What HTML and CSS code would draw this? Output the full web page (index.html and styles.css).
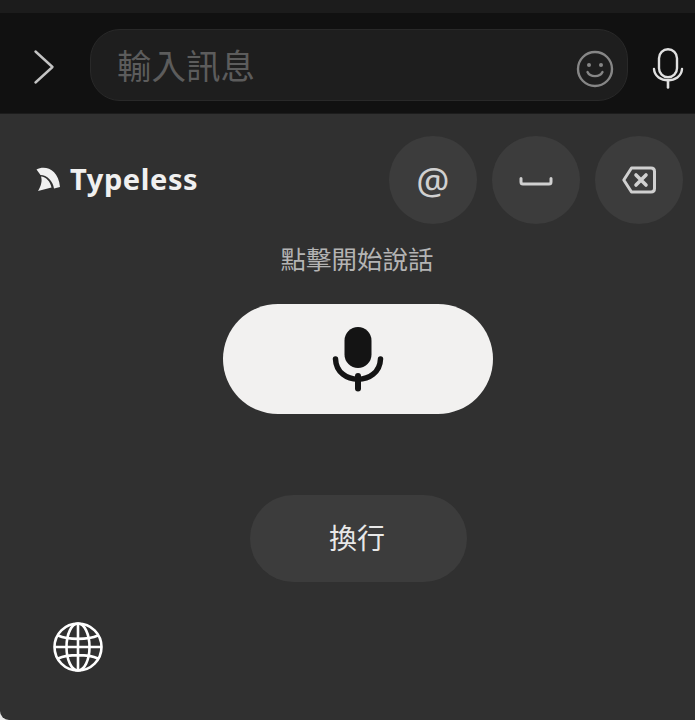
FILE: index.html
```html
<!DOCTYPE html>
<html lang="zh-Hant">
<head>
<meta charset="utf-8">
<title>Typeless</title>
<link rel="stylesheet" href="styles.css">
</head>
<body>
<div class="strip"></div>
<div class="bar">
  <svg class="chevron" width="22" height="36" viewBox="0 0 22 36"><path d="M2.5 2.5 L19.5 18 L2.5 33.5" fill="none" stroke="#c4c4c4" stroke-width="2.4" stroke-linecap="round" stroke-linejoin="round"/></svg>
  <div class="input">
    <span class="placeholder">輸入訊息</span>
    <svg width="38" height="38" viewBox="0 0 38 38"><circle cx="19" cy="19" r="17" fill="none" stroke="#868686" stroke-width="2.4"/><circle cx="13" cy="15" r="2" fill="#868686"/><circle cx="25" cy="15" r="2" fill="#868686"/><path d="M11.5 22 C14 27.5 24 27.5 26.5 22" fill="none" stroke="#868686" stroke-width="2.4" stroke-linecap="round"/></svg>
  </div>
  <svg class="barmic" width="32" height="41" viewBox="0 0 32 41"><rect x="7" y="1.2" width="18" height="28" rx="9" fill="none" stroke="#e0e0e0" stroke-width="2.4"/><path d="M2 21 C3 36 29 36 30 21" fill="none" stroke="#e0e0e0" stroke-width="2.4" stroke-linecap="round"/><path d="M16 33 V39.5" stroke="#e0e0e0" stroke-width="2.6" stroke-linecap="round"/></svg>
</div>
<main class="keyboard">
  <div class="toprow">
    <div class="brand">
      <svg class="logo" width="24" height="24" viewBox="0 0 24 24"><path d="M0.5 2.5 C9 -2 22.5 2 24 20 L18 21.5 C17 14 11 8 4.5 8 Z" fill="#f0f0f0"/><path d="M5 9.5 C10 9.5 14.5 15 15.5 20.5 L2 24 C5 19 6.5 14 5 9.5 Z" fill="#f0f0f0"/></svg>
      <span class="brandname">Typeless</span>
    </div>
    <div class="keys">
      <div class="key"><span class="at">@</span></div>
      <div class="key"><svg class="spacebar" width="34" height="10" viewBox="0 0 34 10"><path d="M2 2.5 V6 Q2 8 4 8 H30 Q32 8 32 6 V2.5" fill="none" stroke="#d0d0d0" stroke-width="3" stroke-linecap="round"/></svg></div>
      <div class="key"><svg width="34" height="28" viewBox="0 0 34 28"><path d="M9.5 2 H29 Q32.5 2 32.5 5.5 V22.5 Q32.5 26 29 26 H9.5 L1.8 14 Z" fill="none" stroke="#d0d0d0" stroke-width="3" stroke-linejoin="round"/><path d="M14 9 L24 19 M24 9 L14 19" stroke="#d0d0d0" stroke-width="3.6" stroke-linecap="round"/></svg></div>
    </div>
  </div>
  <div class="center">
    <p class="hint">點擊開始說話</p>
    <button class="talk"><svg width="54" height="66" viewBox="0 0 54 66"><rect x="13.5" y="1" width="27" height="41" rx="13.5" fill="#141414"/><path d="M4.5 33 C5.5 60 48.5 60 49.5 33" fill="none" stroke="#141414" stroke-width="5.5" stroke-linecap="round"/><path d="M27 50 V62.5" stroke="#141414" stroke-width="6" stroke-linecap="round"/></svg></button>
    <button class="newline">換行</button>
  </div>
  <svg class="globe" width="52" height="52" viewBox="0 0 52 52" fill="none" stroke="#fff" stroke-width="2.6"><circle cx="26" cy="26" r="23.5"/><ellipse cx="26" cy="26" rx="11.5" ry="23.5"/><path d="M26 2.5 V49.5 M2.5 26 H49.5 M6 14.5 C16 19 36 19 46 14.5 M6 37.5 C16 33 36 33 46 37.5"/></svg>
</main>
</body>
</html>
```
FILE: styles.css
```css
html, body {
  margin: 0;
  padding: 0;
  background: #e8e8e8;
}
body {
  width: 695px;
  height: 720px;
  overflow: hidden;
  display: flex;
  flex-direction: column;
  font-family: "Noto Sans CJK TC", "Noto Sans", sans-serif;
}
.strip {
  height: 13px;
  background: #1c1c1c;
}
.bar {
  height: 101px;
  box-sizing: border-box;
  background: #111111;
  border-bottom: 1px solid #1c1c1c;
  display: flex;
  align-items: flex-start;
  padding-top: 16px;
}
.chevron {
  margin: 20px 0 0 33px;
}
.input {
  width: 538px;
  height: 72px;
  box-sizing: border-box;
  margin-left: 35px;
  background: #1e1e1e;
  border: 1px solid #292929;
  border-radius: 30px;
  display: flex;
  align-items: center;
  justify-content: space-between;
  padding: 0 13px 0 26px;
}
.input svg {
  margin-top: 8px;
}
.placeholder {
  font-size: 34.5px;
  line-height: 40px;
  color: #5c5c5c;
  margin-top: -3px;
}
.barmic {
  margin: 19px 0 0 24px;
}
.keyboard {
  flex: 1;
  background: #303030;
  border-bottom-left-radius: 9px;
  display: flex;
  flex-direction: column;
}
.toprow {
  display: flex;
  justify-content: space-between;
  align-items: center;
  padding: 22px 12px 0 36px;
}
.brand {
  display: flex;
  align-items: center;
  gap: 10px;
  margin-top: -2px;
}
.logo {
  margin-top: -1px;
}
.brandname {
  font-family: "Noto Sans", sans-serif;
  font-weight: 700;
  font-size: 29px;
  line-height: 32px;
  letter-spacing: 0.6px;
  color: #f0f0f0;
}
.keys {
  display: flex;
  gap: 15px;
}
.key {
  width: 88px;
  height: 88px;
  border-radius: 50%;
  background: #3c3c3c;
  display: flex;
  align-items: center;
  justify-content: center;
}
.at {
  font-family: "Noto Sans", sans-serif;
  font-weight: 400;
  font-size: 37px;
  line-height: 40px;
  color: #d0d0d0;
}
.spacebar {
  margin-top: 1px;
}
.center {
  display: flex;
  flex-direction: column;
  align-items: center;
  padding-left: 21px;
}
.hint {
  margin: 18px 2px 0 0;
  font-size: 25.5px;
  line-height: 32px;
  color: #b4b4b4;
}
.talk {
  width: 270px;
  height: 110px;
  margin-top: 30px;
  border: 0;
  padding: 0;
  border-radius: 55px;
  background: #f2f1f0;
  display: flex;
  align-items: center;
  justify-content: center;
}
.newline {
  width: 217px;
  height: 87px;
  margin-top: 81px;
  border: 0;
  padding: 0 2px 3px 0;
  border-radius: 44px;
  background: #3c3c3c;
  color: #e8e8e8;
  font-family: inherit;
  font-size: 28px;
}
.globe {
  align-self: flex-start;
  margin: 39px 0 0 52px;
}
```
